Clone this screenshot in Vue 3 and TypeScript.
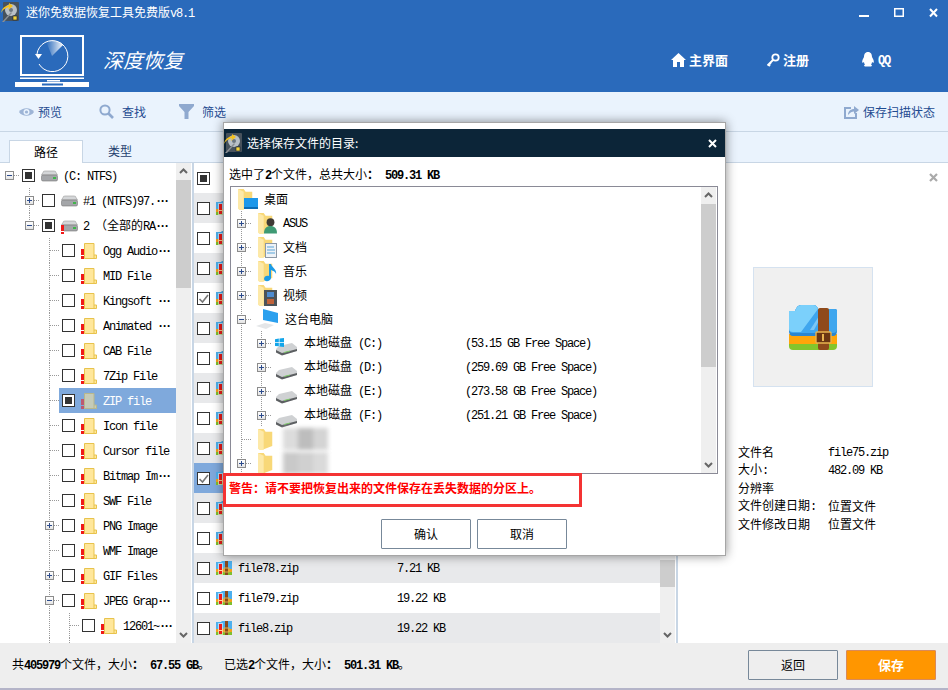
<template>
  <div class="app">
    <!-- shared icons -->
    <svg class="defs" aria-hidden="true">
      <symbol id="appicon" viewBox="0 0 18 20">
        <rect x="2" y="0" width="16" height="19" rx="1" fill="#47525c" />
        <circle cx="10" cy="8" r="6" fill="#b9c0c6" />
        <circle cx="10" cy="8" r="2" fill="#6d7780" />
        <path d="M0 11 C2 7 5 6 8 5 L7 8 L12 4 L8 1 L8 3 C4 4 1 6 0 11Z" fill="#f4c21f" />
        <path d="M1 20 L10 10 L11 11 L3 20Z" fill="#8a8f94" />
        <rect x="12" y="14" width="4" height="4" fill="#f2d23c" stroke="#1d2328" stroke-width=".6" />
      </symbol>
      <symbol id="folderbad" viewBox="0 0 16 16">
        <path d="M3.5 .5 H13 V12 H15.5 V15.5 H3.5Z" fill="#ffe79b" stroke="#e8c34c" />
        <path d="M13 12 V15.5" stroke="#e8c34c" />
        <rect x="0" y="6" width="3" height="6" fill="#f01818" />
        <rect x="0" y="13" width="3" height="3" fill="#f01818" />
      </symbol>
      <symbol id="drive" viewBox="0 0 17 12">
        <path d="M2 2.5 Q2 1 4 1 H13 Q15 1 15 2.5 L16.5 5 H.5Z" fill="#d4d6d8" stroke="#9b9b9b" stroke-width=".6" />
        <rect x=".5" y="5" width="16" height="6" rx="1.5" fill="#a4a6a9" stroke="#777" stroke-width=".6" />
        <rect x="12" y="7" width="3" height="2" fill="#3fb54a" />
      </symbol>
      <symbol id="zipsmall" viewBox="0 0 16 14">
        <path d="M0 1 H5 L6 0 H16 V8 H0Z" fill="#4db0ee" />
        <rect x="0" y="8" width="16" height="3" fill="#f3a11b" />
        <rect x="0" y="11" width="16" height="3" fill="#7fbf2e" />
        <rect x="9" y="0" width="3" height="14" fill="#8a4a1c" />
        <rect x="8" y="7" width="5" height="4" fill="none" stroke="#e2b04a" />
        <rect x="2" y="2" width="5" height="12" fill="#fff" opacity=".55" />
        <rect x="3" y="3" width="3" height="6" fill="#ee1c1c" />
        <rect x="3" y="10" width="3" height="3" fill="#ee1c1c" />
      </symbol>
      <symbol id="dfolder" viewBox="0 0 20 24">
        <path d="M0 2 H6 L8 5 H15 V20 L4 24 Q0 24 0 21Z" fill="#f8d878" />
        <path d="M0 2 L6 5 V24 L3 24 Q0 24 0 21Z" fill="#fde9a8" />
      </symbol>
      <symbol id="hdd" viewBox="0 0 23 16">
        <path d="M4 6 L17 3 L22 7 V11 L7 15 L1 12 V9Z" fill="#cfd1d3" />
        <path d="M1 10 L7 13 L22 9 V11 L7 15.5 L1 12.5Z" fill="#5c5f62" />
        <path d="M9 12 L15 10.4 V11.4 L9 13Z" fill="#7ecb6a" />
      </symbol>
    </svg>

    <header class="head">
      <div class="titlebar">
        <svg class="app-ic"><use href="#appicon" /></svg>
        <span class="app-title"><Txt t="迷你免数据恢复工具免费版v8.1" /></span>
        <div class="winbtns">
          <svg width="10" height="10" viewBox="0 0 10 10"><rect x="0" y="7" width="10" height="2" fill="#fff" /></svg>
          <svg width="10" height="10" viewBox="0 0 10 10"><rect x=".75" y=".75" width="8.5" height="7.5" fill="none" stroke="#fff" stroke-width="1.5" /></svg>
          <svg width="9" height="10" viewBox="0 0 9 10"><path d="M1 1 L8 8.5 M8 1 L1 8.5" stroke="#fff" stroke-width="2" /></svg>
        </div>
      </div>
      <div class="navrow">
        <svg class="logo" width="74" height="53" viewBox="0 0 74 53">
          <defs>
            <linearGradient id="sweep" x1="0" y1="0" x2="1" y2="0">
              <stop offset="0" stop-color="#fff" stop-opacity="0" />
              <stop offset="1" stop-color="#fff" stop-opacity=".95" />
            </linearGradient>
          </defs>
          <rect x="6" y="2" width="62" height="39" fill="none" stroke="#fff" stroke-width="2" />
          <rect x="5" y="43.5" width="64" height="1.5" fill="#fff" />
          <rect x="32" y="46" width="13" height="1.5" fill="#fff" />
          <rect x="0" y="48" width="74" height="5" fill="#fff" />
          <rect x="27" y="49.5" width="21" height="2" fill="#2a6abb" />
          <path d="M22 21 A15.5 15.5 0 1 1 24 31" fill="none" stroke="#fff" stroke-width="1" transform="translate(0 -1)" />
          <path d="M37 22 L31 7.5 A15.5 15.5 0 0 1 48 11Z" fill="url(#sweep)" />
          <path d="M20 20 H27 L23.5 25Z" fill="#fff" />
        </svg>
        <span class="mode">深度恢复</span>
        <nav class="nav">
          <a class="nav-item">
            <svg width="15" height="14" viewBox="0 0 15 14"><path d="M7.5 0 L15 7 H13 V14 H9 V9 H6 V14 H2 V7 H0Z" fill="#fff" /></svg>
            <span>主界面</span>
          </a>
          <a class="nav-item">
            <svg width="14" height="14" viewBox="0 0 14 14"><circle cx="9.5" cy="4.5" r="3.2" fill="none" stroke="#fff" stroke-width="1.8" /><path d="M7 7 L1.5 12.5 M2 11 L4 13 M3.5 9.5 L5 11" stroke="#fff" stroke-width="1.8" /></svg>
            <span>注册</span>
          </a>
          <a class="nav-item qq">
            <svg width="14" height="15" viewBox="0 0 14 15"><path d="M7 0 C10 0 11 2.5 11 5 C12 7 13.5 9 12.5 11 L11 10 C11 11 10.5 12 10 12.5 C11 13 11.5 14 10 14.5 H4 C2.5 14 3 13 4 12.5 C3.5 12 3 11 3 10 L1.5 11 C.5 9 2 7 3 5 C3 2.5 4 0 7 0Z" fill="#fff" /></svg>
            <b><Txt t="QQ" /></b>
          </a>
        </nav>
      </div>
    </header>

    <div class="toolbar">
      <a class="tool">
        <svg width="15" height="12" viewBox="0 0 15 12"><path d="M0 6 C3 1 12 1 15 6 C12 11 3 11 0 6Z" fill="#9db4d6" /><circle cx="7.5" cy="6" r="3" fill="#eaf3fd" /><circle cx="7.5" cy="6" r="1.6" fill="#9db4d6" /></svg>
        <span class="first">预览</span>
      </a>
      <a class="tool">
        <svg width="15" height="15" viewBox="0 0 15 15"><circle cx="6" cy="6" r="4.6" fill="none" stroke="#8fa9cf" stroke-width="2" /><path d="M9.5 9.5 L14 14" stroke="#8fa9cf" stroke-width="2.6" /></svg>
        <span>查找</span>
      </a>
      <a class="tool">
        <svg width="15" height="15" viewBox="0 0 15 15"><path d="M0 0 H15 V2 L9.5 8 V15 H5.5 V8 L0 2Z" fill="#8fa9cf" /></svg>
        <span>筛选</span>
      </a>
      <a class="tool-save">
        <svg width="15" height="15" viewBox="0 0 15 15"><path d="M0 3 H7 V5 H2 V13 H11 V9 H13 V15 H0Z" fill="#8fa9cf" /><path d="M4 11 C4 7 7 5 10 5 V2 L15 6 L10 10 V7.5 C8 7.5 6 8.5 4 11Z" fill="#8fa9cf" /></svg>
        <span>保存扫描状态</span>
      </a>
    </div>

    <div class="tabs">
      <div class="tab active">路径</div>
      <div class="tab">类型</div>
    </div>

    <main class="content">
      <!-- path tree -->
      <section class="tree">
        <div v-for="(r, i) in treeRows" :key="i" class="trow">
          <span v-for="n in r.level" :key="n" class="cell" :class="{ vline: n === 3 }"></span>
          <span class="cell expcell" :class="{ vline: r.level > 0, vend: r.end }">
            <i v-if="r.exp" class="exp"><em :class="r.exp === '+' ? 'plus' : 'minus'"></em></i>
            <i class="dash" :class="{ solo: !r.exp }"></i>
          </span>
          <div class="tbody" :class="{ sel: r.sel }">
            <span class="cb" :class="r.check"></span>
            <svg v-if="r.icon === 'folder'" class="ic-folder" :class="{ dim: r.sel }"><use href="#folderbad" /></svg>
            <span v-else class="ic-drive">
              <svg><use href="#drive" /></svg>
              <i v-if="r.icon === 'bad'" class="bang"></i>
            </span>
            <span v-if="r.text" class="tname"><Txt :t="r.text" /><span v-if="r.more" class="more">···</span></span>
          </div>
        </div>
      </section>
      <div class="sb tree-sb">
        <svg class="arrow" viewBox="0 0 15 17"><path d="M4 10 L7.5 6.5 L11 10" /></svg>
        <div class="thumb" style="height: 108px"></div>
        <div class="track"></div>
        <svg class="arrow" viewBox="0 0 15 17"><path d="M4 7 L7.5 10.5 L11 7" /></svg>
      </div>

      <!-- file list -->
      <section class="list">
        <div class="rows">
          <div class="frow head-row"><span class="cb part"></span></div>
          <div
            v-for="(f, i) in files"
            :key="i"
            class="frow"
            :class="{ odd: i % 2 === 0, sel: f.sel }"
          >
            <span class="cb" :class="{ on: f.on }"><svg v-if="f.on" width="11" height="11" viewBox="0 0 11 11"><path d="M1.5 6 L4.5 9 L10 2" fill="none" stroke="#777" stroke-width="1.6" /></svg></span>
            <svg class="ic-zip"><use href="#zipsmall" /></svg>
            <!-- rows under the dialog show only their checkbox and icon -->
            <template v-if="f.name">
              <span class="fname"><Txt :t="f.name" /></span>
              <span><Txt :t="f.size" /></span>
            </template>
          </div>
        </div>
        <div class="sb list-sb">
          <svg class="arrow" viewBox="0 0 15 17"><path d="M4 10 L7.5 6.5 L11 10" /></svg>
          <div class="track"></div>
          <div class="thumb" style="height: 27px"></div>
          <div class="track-b"></div>
          <svg class="arrow" viewBox="0 0 15 17"><path d="M4 7 L7.5 10.5 L11 7" /></svg>
        </div>
      </section>

      <!-- preview -->
      <aside class="preview">
        <div class="pclose">
          <svg width="9" height="9" viewBox="0 0 9 9"><path d="M1 1 L8 8 M8 1 L1 8" stroke="#aaa" stroke-width="2.2" /></svg>
        </div>
        <div class="pbox">
          <svg width="48" height="45" viewBox="0 0 48 45">
            <path d="M0 36 H48 V41 Q48 45 44 45 H4 Q0 45 0 41Z" fill="#84c52c" />
            <rect x="0" y="29" width="48" height="10" fill="#ffa50a" />
            <path d="M0 6 H6 Q8 0 12 0 H24 Q28 0 29 4 H46 Q48 4 48 6 V26 Q48 31 44 31 H4 Q0 31 0 26Z" fill="#2b86d0" />
            <path d="M0 6 H6 Q8 0 12 0 H24 Q28 0 29 4 H46 Q48 4 48 6 V24 Q48 28 44 28 H4 Q0 28 0 24Z" fill="#3fa6ee" />
            <path d="M0 6 H6 Q8 0 12 0 H24 Q28 0 29 4 H29 L12 27 H4 Q0 27 0 24Z" fill="#7bd0fb" />
            <path d="M21 25 L32 8 H34 L25 25Z" fill="#a5def9" opacity=".6" />
            <rect x="29" y="3" width="11" height="42" rx="2" fill="#8f4a1b" />
            <rect x="27" y="27" width="15" height="11" rx="1" fill="#6b3612" stroke="#e8b450" stroke-width="1.4" />
            <rect x="33" y="29" width="2" height="7" fill="#e8b450" />
          </svg>
        </div>
        <div class="pinfo">
          <span>文件名</span><span><Txt t="file75.zip" /></span>
          <span><Txt t="大小:" /></span><span><Txt t="482.09 KB" /></span>
          <span>分辨率</span><span></span>
          <span><Txt t="文件创建日期:" /></span><span>位置文件</span>
          <span>文件修改日期</span><span>位置文件</span>
        </div>
      </aside>
    </main>

    <footer class="foot">
      <span class="sum"><Txt t="共" /><b><Txt t="405979" /></b><Txt t="个文件，大小" /><b>：<Txt t=" 67.55 GB" /></b>。</span>
      <span class="sum"><Txt t="已选" /><b><Txt t="2" /></b><Txt t="个文件，大小" /><b>：<Txt t=" 501.31 KB" /></b>。</span>
      <div class="foot-btns">
        <button class="btn">返回</button>
        <button class="btn save">保存</button>
      </div>
    </footer>

    <!-- save dialog -->
    <div class="dialog">
      <div class="dlg-head">
        <svg class="dlg-ic"><use href="#appicon" /></svg>
        <span>选择保存文件的目录:</span>
        <svg class="dlg-x" width="9" height="9" viewBox="0 0 9 9"><path d="M1 1 L8 8 M8 1 L1 8" stroke="#fff" stroke-width="2" /></svg>
      </div>
      <div class="dlg-info"><Txt t="选中了" /><b><Txt t="2" /></b><Txt t="个文件，总共大小" /><b>：<Txt t=" 509.31 KB" /></b></div>
      <div class="dlg-box">
        <div class="dlg-tree">
          <div class="drow top">
            <span class="ic-dt">
              <svg class="ic-y"><use href="#dfolder" /></svg>
              <svg class="over-desk" width="14" height="11" viewBox="0 0 14 11"><rect width="14" height="10" fill="#1c97ea" /><rect y="9" width="14" height="2" fill="#0b6cb5" /></svg>
            </span>
            <span>桌面</span>
          </div>
          <div v-for="d in places" :key="d.name" class="drow">
            <span class="dcell vline"><i class="exp"><em class="plus"></em></i><i class="dash"></i></span>
            <span class="ic-dt">
              <svg class="ic-y"><use href="#dfolder" /></svg>
              <svg v-if="d.kind === 'user'" class="over" width="13" height="17" viewBox="0 0 14 17"><circle cx="7" cy="5" r="4.2" fill="#3f3a35" /><path d="M0 17 C0 11 3 9 7 9 C11 9 14 11 14 17Z" fill="#3f9a74" /></svg>
              <svg v-if="d.kind === 'doc'" class="over" width="12" height="15" viewBox="0 0 12 15"><rect x=".5" y=".5" width="11" height="14" fill="#eef2f6" stroke="#8c98a5" /><path d="M2 4 H9 M2 7 H10 M2 10 H10" stroke="#5aa5d8" /></svg>
              <svg v-if="d.kind === 'music'" class="over" width="13" height="18" viewBox="0 0 13 18"><path d="M5 0 H7 C8 4 13 5 12 10 C11 7 9 7 7 6 V14 C7 17 1 19 0 15 C0 12 3 11 5 12Z" fill="#1c9be6" /></svg>
              <svg v-if="d.kind === 'video'" class="over" width="13" height="16" viewBox="0 0 13 16"><rect width="13" height="16" fill="#4c5358" /><rect x="3" y="2" width="7" height="5" fill="#4d8bd0" /><rect x="3" y="9" width="7" height="5" fill="#c0623a" /></svg>
            </span>
            <span><Txt :t="d.name" /></span>
          </div>
          <div class="drow">
            <span class="dcell vline"><i class="exp"><em class="minus"></em></i><i class="dash"></i></span>
            <svg class="ic-pc" width="23" height="20" viewBox="0 0 23 20">
              <path d="M7 0 L22 4 V14 L7 11Z" fill="#2ba0ee" />
              <path d="M0 17 L9 14 L18 16 L10 20Z" fill="#e4e6e8" />
            </svg>
            <span class="pc-name">这台电脑</span>
          </div>
          <div v-for="(v, i) in volumes" :key="v.name" class="drow">
            <span class="dcell vline"></span>
            <span class="dcell vline"><i class="exp"><em class="plus"></em></i><i class="dash"></i></span>
            <span class="ic-hdd">
              <svg width="23" height="16"><use href="#hdd" /></svg>
              <svg v-if="i === 0" class="win" width="9" height="9" viewBox="0 0 8 8"><path d="M0 1 L3.4 .5 V3.6 H0Z M4 .4 L8 0 V3.6 H4Z M0 4.2 H3.4 V7.4 L0 7Z M4 4.2 H8 V8 L4 7.5Z" fill="#12a5ea" /></svg>
            </span>
            <span class="vname"><Txt :t="v.name" /></span>
            <span><Txt :t="v.free" /></span>
          </div>
          <div class="drow">
            <span class="dcell vline"><i class="dash solo"></i></span>
            <span class="ic-dt"><svg class="ic-y"><use href="#dfolder" /></svg></span>
            <span class="smudge">
              <i style="background: #dcdcdc"></i><i style="background: #bdbdbd"></i><i style="background: #d4d4d4"></i>
            </span>
          </div>
          <div class="drow">
            <span class="dcell vline"><i class="exp"><em class="plus"></em></i><i class="dash"></i></span>
            <span class="ic-dt"><svg class="ic-y"><use href="#dfolder" /></svg></span>
            <span class="smudge">
              <i style="background: #c9c9c9"></i><i style="background: #d0d0d0"></i><i style="background: #dadada"></i>
            </span>
          </div>
        </div>
        <div class="sb dlg-sb">
          <svg class="arrow" viewBox="0 0 15 17"><path d="M4 10 L7.5 6.5 L11 10" /></svg>
          <div class="thumb" style="height: 163px"></div>
          <div class="track"></div>
          <svg class="arrow" viewBox="0 0 15 17"><path d="M4 7 L7.5 10.5 L11 7" /></svg>
        </div>
      </div>
      <div class="warn">警告：请不要把恢复出来的文件保存在丢失数据的分区上。</div>
      <div class="dlg-btns">
        <button class="btn">确认</button>
        <button class="btn">取消</button>
      </div>
    </div>
  </div>
</template>

<script setup lang="ts">
import { h } from 'vue';

interface TreeRow {
  level: number;
  text: string;
  more?: boolean;
  exp?: '+' | '-';
  check?: string;
  icon: 'folder' | 'drive' | 'bad';
  sel?: boolean;
  end?: boolean;
}

// Latin runs get the half-width mono face, the rest the CJK face
const Txt = (props: { t: string }) =>
  (props.t.match(/[\x00-\xff]+|[^\x00-\xff]+/g) || []).map((s) =>
    h('span', { class: /^[\x00-\xff]/.test(s) ? 'en' : 'cjk' }, s)
  );

const treeRows: TreeRow[] = [
  { level: 0, text: '(C: NTFS)', exp: '-', check: 'part', icon: 'drive' },
  { level: 1, text: '#1 (NTFS)97.', more: true, exp: '+', icon: 'drive' },
  { level: 1, text: '2 （全部的RA', more: true, exp: '-', check: 'part', icon: 'bad', end: true },
  { level: 2, text: 'Ogg Audio', more: true, icon: 'folder' },
  { level: 2, text: 'MID File', icon: 'folder' },
  { level: 2, text: 'Kingsoft ', more: true, icon: 'folder' },
  { level: 2, text: 'Animated ', more: true, icon: 'folder' },
  { level: 2, text: 'CAB File', icon: 'folder' },
  { level: 2, text: '7Zip File', icon: 'folder' },
  { level: 2, text: 'ZIP file', check: 'part', icon: 'folder', sel: true },
  { level: 2, text: 'Icon file', icon: 'folder' },
  { level: 2, text: 'Cursor file', icon: 'folder' },
  { level: 2, text: 'Bitmap Im', more: true, icon: 'folder' },
  { level: 2, text: 'SWF File', icon: 'folder' },
  { level: 2, text: 'PNG Image', exp: '+', icon: 'folder' },
  { level: 2, text: 'WMF Image', icon: 'folder' },
  { level: 2, text: 'GIF Files', exp: '+', icon: 'folder' },
  { level: 2, text: 'JPEG Grap', more: true, exp: '-', icon: 'folder' },
  { level: 3, text: '12601~', more: true, icon: 'folder' },
  { level: 3, text: '', icon: 'folder' },
];

// first 12 rows sit behind the dialog, only the last three show their text
const files = [
  { name: '', size: '' },
  { name: '', size: '' },
  { name: '', size: '' },
  { name: '', size: '', on: true },
  { name: '', size: '' },
  { name: '', size: '' },
  { name: '', size: '' },
  { name: '', size: '' },
  { name: '', size: '' },
  { name: '', size: '', on: true, sel: true },
  { name: '', size: '' },
  { name: '', size: '' },
  { name: 'file78.zip', size: '7.21 KB' },
  { name: 'file79.zip', size: '19.22 KB' },
  { name: 'file8.zip', size: '19.22 KB' },
];

const places = [
  { name: 'ASUS', kind: 'user' },
  { name: '文档', kind: 'doc' },
  { name: '音乐', kind: 'music' },
  { name: '视频', kind: 'video' },
];

const volumes = [
  { name: '本地磁盘 (C:)', free: '(53.15 GB Free Space)' },
  { name: '本地磁盘 (D:)', free: '(259.69 GB Free Space)' },
  { name: '本地磁盘 (E:)', free: '(273.58 GB Free Space)' },
  { name: '本地磁盘 (F:)', free: '(251.21 GB Free Space)' },
];
</script>

<style>
.en {
  font-family: "Liberation Mono", monospace;
  font-size: 12px;
  letter-spacing: -1.2px;
  white-space: pre;
}
.cjk {
  white-space: pre;
}
</style>

<style scoped>
.app {
  position: relative;
  display: flex;
  flex-direction: column;
  width: 948px;
  height: 690px;
  overflow: hidden;
  background: #fff;
  color: #000;
  font-family: "Noto Sans CJK SC", "Liberation Sans", sans-serif;
  font-size: 12px;
  line-height: 16px;
}

.defs {
  position: absolute;
  width: 0;
  height: 0;
}

/* header */
.head {
  height: 92px;
  background: #2a6abb;
  color: #fff;
  flex: none;
}
.titlebar {
  display: flex;
  align-items: flex-start;
  height: 34px;
}
.app-ic {
  width: 18px;
  height: 20px;
  margin: 2px 0 0 1px;
}
.app-title {
  margin: 4px 0 0 7px;
}
.winbtns {
  display: flex;
  gap: 25px;
  margin: 8px 10px 0 auto;
}
.navrow {
  display: flex;
  align-items: center;
  height: 58px;
  padding: 0 0 7px 15px;
  box-sizing: border-box;
}
.logo {
  align-self: flex-start;
}
.mode {
  margin-left: 14px;
  font-size: 20px;
  font-style: italic;
  line-height: 24px;
}
.nav {
  display: flex;
  margin-left: auto;
}
.nav-item {
  display: flex;
  align-items: center;
  gap: 3px;
  width: 95px;
  font-size: 13px;
  font-weight: 700;
}
.nav-item.qq {
  width: 87px;
}

/* toolbar */
.toolbar {
  display: flex;
  align-items: center;
  height: 40px;
  flex: none;
  box-sizing: border-box;
  padding: 0 13px 0 19px;
  background: #eaf3fd;
  border-bottom: 1px solid #c8d6e5;
  color: #1f4b91;
}
.tool {
  display: flex;
  align-items: center;
  gap: 8px;
  width: 80px;
}
.tool .first {
  margin-left: -4px;
}
.tool-save {
  display: flex;
  align-items: center;
  gap: 4px;
  margin-left: auto;
}

/* tabs */
.tabs {
  display: flex;
  align-items: flex-end;
  height: 31px;
  flex: none;
  box-sizing: border-box;
  padding-left: 9px;
  background: #eaf3fd;
  border-bottom: 1px solid #c8d6e5;
}
.tab {
  width: 74px;
  height: 23px;
  margin-bottom: -1px;
  box-sizing: border-box;
  text-align: center;
  line-height: 22px;
  color: #1f3f6e;
}
.tab.active {
  background: #fff;
  border: 1px solid #c8d6e5;
  border-bottom: 0;
  color: #000;
}

/* content */
.content {
  display: flex;
  flex: 1;
  min-height: 0;
}
.tree {
  width: 176px;
  flex: none;
  overflow: hidden;
}
.trow {
  display: flex;
  height: 25px;
}
.cell {
  display: flex;
  align-items: center;
  width: 20px;
  flex: none;
}
.vline {
  background: linear-gradient(#999 50%, transparent 50%) 9px 0 / 1px 2px repeat-y;
}
.vend {
  background:
    linear-gradient(#fff, #fff) 9px 100% / 1px 12px no-repeat,
    linear-gradient(#999 50%, transparent 50%) 9px 0 / 1px 2px repeat-y;
}
.expcell .exp {
  margin-left: 5px;
}
.exp {
  position: relative;
  display: block;
  width: 9px;
  height: 9px;
  box-sizing: border-box;
  flex: none;
  border: 1px solid #8c8c8c;
  background: linear-gradient(#fff, #e4e4e4);
}
.exp em {
  position: absolute;
  left: 1px;
  top: 3px;
  width: 5px;
  height: 1px;
  background: #2c4b8c;
}
.exp em.plus::after {
  content: "";
  position: absolute;
  left: 2px;
  top: -2px;
  width: 1px;
  height: 5px;
  background: #2c4b8c;
}
.dash {
  display: block;
  width: 6px;
  height: 1px;
  background: linear-gradient(90deg, #999 50%, transparent 50%) 0 0 / 2px 1px repeat-x;
}
.dash.solo {
  width: 10px;
  margin-left: 10px;
}
.tbody {
  display: flex;
  align-items: center;
  flex: 1;
  min-width: 0;
  margin-left: -1px;
  padding-left: 3px;
}
.tbody.sel {
  background: #7fa9dc;
  color: #fff;
}
.cb {
  display: flex;
  align-items: center;
  justify-content: center;
  width: 13px;
  height: 13px;
  flex: none;
  box-sizing: border-box;
  border: 1px solid #333;
  background: #fff;
}
.cb.part::after {
  content: "";
  width: 7px;
  height: 7px;
  background: #333;
}
.ic-folder {
  width: 16px;
  height: 16px;
  flex: none;
  margin-left: 6px;
}
.ic-folder.dim {
  opacity: 0.55;
}
.ic-drive {
  position: relative;
  display: block;
  width: 16px;
  height: 12px;
  flex: none;
  margin-left: 6px;
}
.ic-drive svg {
  display: block;
  width: 17px;
  height: 12px;
}
.bang {
  position: absolute;
  left: 0;
  top: 5px;
  width: 3px;
  height: 9px;
  background: linear-gradient(#f01818 65%, #fff 65%, #fff 75%, #f01818 75%);
}
.tname {
  margin-left: 6px;
  white-space: nowrap;
}
.more {
  font-family: "Liberation Mono", monospace;
  font-weight: 700;
  letter-spacing: -3.2px;
}

.sb {
  display: flex;
  flex-direction: column;
  width: 15px;
  flex: none;
  background: #efefef;
}
.tree-sb {
  margin-right: 1px;
}
.arrow {
  display: block;
  width: 15px;
  height: 17px;
  flex: none;
  fill: none;
  stroke: #666;
  stroke-width: 2;
}
.thumb {
  flex: none;
  background: #cdcdcd;
}
.track {
  flex: 1;
}
.track-b {
  height: 39px;
  flex: none;
}

.list {
  display: flex;
  width: 486px;
  flex: none;
  padding-right: 1px;
  box-sizing: border-box;
  border-left: 2px solid #c8d6e5;
  border-right: 2px solid #c8d6e5;
}
.rows {
  flex: 1;
  min-width: 0;
  overflow: hidden;
}
.frow {
  display: flex;
  align-items: center;
  height: 30px;
  padding-left: 3px;
}
.frow.odd {
  background: #e8e9eb;
}
.frow.sel {
  background: #7fa9dc;
}
.ic-zip {
  width: 16px;
  height: 14px;
  margin-left: 6px;
  flex: none;
}
.fname {
  width: 159px;
  margin-left: 6px;
  flex: none;
}

/* preview */
.preview {
  flex: 1;
  min-width: 0;
}
.pclose {
  display: flex;
  justify-content: flex-end;
  padding: 10px 10px 0 0;
  height: 104px;
  box-sizing: border-box;
}
.pbox {
  display: flex;
  align-items: center;
  justify-content: center;
  width: 120px;
  height: 120px;
  margin-left: 75px;
  box-sizing: border-box;
  background: #f0f0f0;
  border: 1px solid #d5e2f0;
}
.pinfo {
  display: grid;
  grid-template-columns: 90px auto;
  grid-auto-rows: 18px;
  align-items: center;
  margin: 56px 0 0 60px;
}

/* footer */
.foot {
  display: flex;
  align-items: center;
  height: 47px;
  flex: none;
  box-sizing: border-box;
  padding: 0 12px 1px;
  background: #eeeeee;
  border-bottom: 2px solid #b4b4c8;
}
.sum {
  white-space: nowrap;
}
.sum:first-child {
  width: 212px;
}
.foot-btns {
  display: flex;
  gap: 8px;
  margin-left: auto;
}
.btn {
  width: 90px;
  height: 30px;
  padding: 0;
  box-sizing: border-box;
  border: 1px solid #778899;
  border-radius: 1px;
  background: #eeeeee;
  color: #000;
  font: inherit;
}
.btn.save {
  background: #ff9600;
  border-color: #d98a5a;
  color: #fff;
  font-size: 13px;
  font-weight: 700;
}

/* dialog */
.dialog {
  position: absolute;
  left: 223px;
  top: 122px;
  width: 503px;
  height: 434px;
  box-sizing: border-box;
  padding-top: 6px;
  background: #fff;
  border: 1px solid #a6a6a6;
  box-shadow: 0 0 10px rgba(0, 0, 0, 0.45);
}
.dlg-head {
  display: flex;
  align-items: center;
  height: 28px;
  background: #0c2538;
  color: #fff;
}
.dlg-ic {
  width: 18px;
  height: 20px;
}
.dlg-head span {
  margin-left: 5px;
}
.dlg-x {
  margin: 0 8px 0 auto;
}
.dlg-info {
  height: 29px;
  padding-left: 5px;
  box-sizing: border-box;
  line-height: 34px;
  white-space: nowrap;
}
.dlg-box {
  display: flex;
  height: 288px;
  margin: 0 7px 0 6px;
  box-sizing: border-box;
  border: 1px solid #8a8a96;
  overflow: hidden;
}
.dlg-tree {
  flex: 1;
  min-width: 0;
}
.drow {
  display: flex;
  align-items: center;
  height: 24px;
}
.dcell {
  display: flex;
  align-items: center;
  align-self: stretch;
  width: 20px;
  flex: none;
  background-position-x: 10px;
}
.dcell .exp {
  margin-left: 6px;
}
.dcell .dash {
  width: 5px;
}
.dcell .dash.solo {
  width: 9px;
  margin-left: 11px;
}
.drow.top {
  padding-left: 7px;
}
.drow.top span:last-child {
  margin-left: 7px;
}
.ic-dt {
  position: relative;
  display: block;
  width: 19px;
  height: 24px;
  flex: none;
  margin-left: 7px;
}
.drow.top .ic-dt {
  margin-left: 0;
}
.ic-dt + span {
  margin-left: 6px;
}
.ic-y {
  display: block;
  width: 19px;
  height: 23px;
}
.over {
  position: absolute;
  right: 0;
  bottom: 1px;
}
.over-desk {
  position: absolute;
  left: 6px;
  bottom: 2px;
}
.ic-pc {
  flex: none;
  margin: 0 0 0 5px;
}
.pc-name {
  margin-left: 6px;
}
.ic-hdd {
  position: relative;
  display: block;
  width: 23px;
  height: 16px;
  flex: none;
  margin: 10px 0 0 4px;
}
.win {
  position: absolute;
  left: 0;
  top: -2px;
}
.vname {
  width: 161px;
  margin-left: 6px;
  flex: none;
}
.smudge {
  display: flex;
  height: 22px;
  filter: blur(2px);
}
.smudge i {
  display: block;
  width: 15px;
}
.dlg-sb {
  margin-right: 1px;
}
.warn {
  position: relative;
  height: 34px;
  width: 359px;
  margin: -1px 0 0 -1px;
  box-sizing: border-box;
  padding-left: 3px;
  border: 3px solid #f43333;
  color: #f00;
  background: #fff;
  font-weight: 700;
  line-height: 23px;
  white-space: nowrap;
}
.dlg-btns {
  display: flex;
  gap: 6px;
  margin: 12px 0 0 157px;
}
.dlg-btns .btn {
  background: #fff;
}
</style>
